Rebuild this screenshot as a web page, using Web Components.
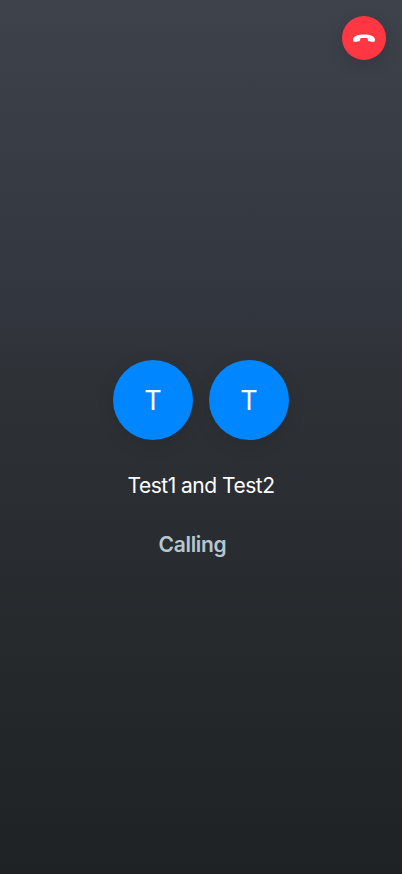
<!DOCTYPE html>
<html lang="en">
<head>
<meta charset="utf-8">
<title>Calling</title>
<style>
html, body { margin: 0; height: 100%; background: #1e2224; }
</style>
</head>
<body>
<call-screen>
  <hangup-button slot="action"></hangup-button>
  <call-avatar>T</call-avatar>
  <call-avatar>T</call-avatar>
  <span slot="names">Test1 and Test2</span>
  <span slot="status">Calling</span>
</call-screen>
<script>
class CallAvatar extends HTMLElement {
  constructor() {
    super();
    this.attachShadow({ mode: 'open' }).innerHTML = `
      <style>
        :host { display: grid; place-items: center; box-sizing: border-box; width: 80px; height: 80px; padding-top: 1px; border-radius: 50%;
          background: #0087ff; color: #fff; font-size: 27px; line-height: 34px; font-weight: 380;
          box-shadow: 0 5px 18px rgba(0,0,0,.1); }
      </style><span><slot></slot></span>`;
  }
}
customElements.define('call-avatar', CallAvatar);

class HangupButton extends HTMLElement {
  constructor() {
    super();
    this.attachShadow({ mode: 'open' }).innerHTML = `
      <style>
        :host { display: block; width: 44px; height: 44px; border-radius: 50%; background: #ff3742;
          box-shadow: 0 5px 16px rgba(0,0,0,.13); }
        button { all: unset; display: grid; place-items: center; width: 100%; height: 100%; }
        svg { display: block; }
      </style>
      <button aria-label="Hang up">
        <svg width="24" height="12" viewBox="0 0 24 12" fill="#fff">
          <path d="M12 2.500C17.800 2.500 23 4.400 23 7.700C23 9.400 22.100 10.200 20.500 9.900L17.300 9.300C16.200 9.100 15.800 8.600 15.800 7.700V6.900C15.800 6.600 15.600 6.400 15.300 6.300C14.600 6.100 13.500 5.900 12 5.900S9.400 6.100 8.700 6.300C8.400 6.400 8.200 6.600 8.200 6.900V7.700C8.200 8.600 7.800 9.100 6.700 9.300L3.500 9.900C1.900 10.200 1 9.400 1 7.700C1 4.400 6.200 2.500 12 2.500Z"/>
        </svg>
      </button>`;
  }
}
customElements.define('hangup-button', HangupButton);

class CallScreen extends HTMLElement {
  constructor() {
    super();
    this.attachShadow({ mode: 'open' }).innerHTML = `
      <style>
        :host { display: flex; flex-direction: column; box-sizing: border-box; height: 100vh; overflow: hidden;
          padding: 16px; font-family: Inter, "Liberation Sans", sans-serif; color: #fff;
          background: linear-gradient(#3d424b 0%, #32363f 35%, #2e3136 43%, #2b2e32 55%, #262a2d 72%, #1e2224 100%); }
        header { display: flex; justify-content: flex-end; height: 44px; }
        main { display: flex; flex-direction: column; align-items: center; padding-top: 300px; }
        .avatars { display: flex; gap: 16px; }
        .names { margin-top: 32px; font-size: 21px; line-height: 28px; font-weight: 400; letter-spacing: -.5px; white-space: nowrap; }
        .status { margin-top: 31px; margin-right: 17px; font-size: 21px; line-height: 28px; font-weight: 600;
          letter-spacing: -.32px; color: #b4c7d0; white-space: nowrap; }
      </style>
      <header><slot name="action"></slot></header>
      <main>
        <div class="avatars"><slot></slot></div>
        <div class="names"><slot name="names"></slot></div>
        <div class="status"><slot name="status"></slot></div>
      </main>`;
  }
}
customElements.define('call-screen', CallScreen);
</script>
</body>
</html>
